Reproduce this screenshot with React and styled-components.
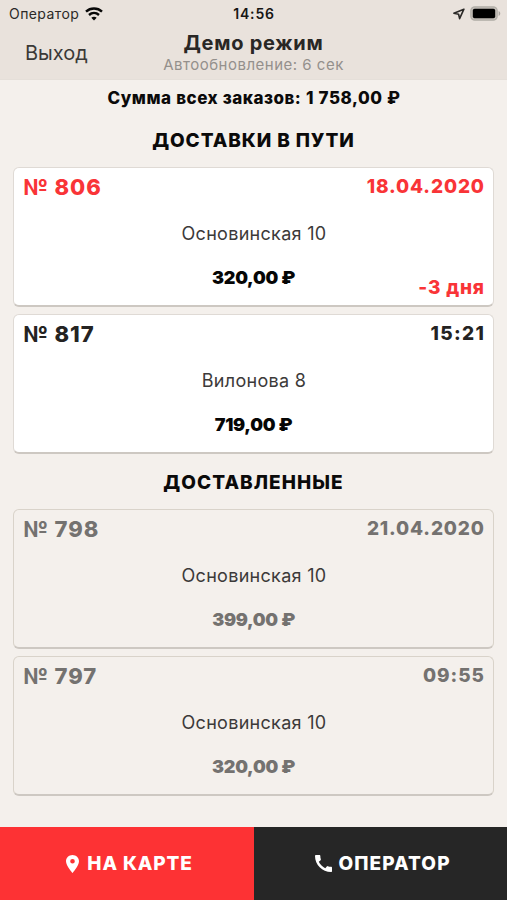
import React from 'react';
import styled, { createGlobalStyle } from 'styled-components';

const GlobalStyle = createGlobalStyle`
  * { box-sizing: border-box; }
  body { margin: 0; background: #f4f0ec; font-family: Inter, sans-serif; }
`;

const Screen = styled.div`
  display: flex;
  flex-direction: column;
  height: 900px;
  overflow: hidden;
  background: #f4f0ec;
`;

const Header = styled.header`
  flex: none;
  height: 80px;
  background: #e9e2dc;
  border-bottom: 1px solid #e5dfd9;
`;

const StatusBar = styled.div`
  display: grid;
  grid-template-columns: 1fr auto 1fr;
  align-items: center;
  height: 27px;
  padding: 0 6px 0 9px;
  color: #2b2927;
  font-size: 14px;
`;

const Carrier = styled.div`
  display: flex;
  align-items: center;
  gap: 6px;
  letter-spacing: 0.42px;
  line-height: 27px;
`;

const Clock = styled.div`
  margin-left: -2px;
  color: #171615;
  font-weight: 600;
  letter-spacing: 0.85px;
`;

const StatusIcons = styled.div`
  display: flex;
  align-items: center;
  justify-content: flex-end;
  gap: 5px;
`;

const NavBar = styled.div`
  display: grid;
  grid-template-columns: 1fr auto 1fr;
  height: 52px;
`;

const ExitButton = styled.button`
  justify-self: start;
  height: 52px;
  padding: 0 0 0 25px;
  border: 0;
  background: none;
  color: #3b3937;
  font: 400 20px/52px Inter, sans-serif;
`;

const TitleGroup = styled.div`
  padding-top: 4px;
  text-align: center;
`;

const Title = styled.h1`
  margin: 0;
  color: #292725;
  font-size: 20px;
  font-weight: 700;
  line-height: 24px;
  letter-spacing: 0.75px;
`;

const Subtitle = styled.div`
  color: #94908c;
  font-size: 15px;
  line-height: 20px;
  letter-spacing: 0.5px;
`;

const Content = styled.main`
  flex: 1;
  padding: 0 13px;
`;

const Total = styled.div`
  height: 36px;
  padding-left: 1px;
  color: #0b0a0a;
  font-size: 17px;
  font-weight: 800;
  line-height: 36px;
  letter-spacing: 0.5px;
  word-spacing: 0.4px;
  text-align: center;
`;

const SectionTitle = styled.h2`
  margin: 0;
  height: ${p => p.$height}px;
  color: #0b0a0a;
  font-size: 19px;
  font-weight: 800;
  line-height: ${p => p.$line}px;
  letter-spacing: ${p => p.$spacing}px;
  text-align: center;
`;

const CardList = styled.div`
  display: flex;
  flex-direction: column;
  gap: 6.5px;
`;

const tones = { late: '#f93437', active: '#242322', done: '#747270' };

const Card = styled.article`
  display: grid;
  grid-template-columns: 1fr auto 1fr;
  grid-template-rows: 40px 52px 1fr;
  height: 140px;
  padding: 0 9px;
  border: 1px solid ${p => (p.$done ? '#d9d3ca' : '#dfdad5')};
  border-bottom: 2px solid #cdc8c2;
  border-radius: 6px;
  background: ${p => (p.$done ? '#f4f0ec' : '#fff')};
`;

const CardHead = styled.div`
  grid-column: 1 / -1;
  display: flex;
  justify-content: space-between;
  color: ${p => tones[p.$tone]};
  font-weight: 800;
  line-height: 38px;
`;

const OrderNumber = styled.span`
  padding-left: 0.5px;
  font-size: 22px;
  letter-spacing: 0.95px;
`;

const OrderTime = styled.span`
  margin-right: -${p => p.$spacing}px;
  font-size: 19px;
  line-height: 37px;
  letter-spacing: ${p => p.$spacing}px;
`;

const Address = styled.div`
  grid-column: 1 / -1;
  padding-left: 1px;
  color: #3c3a39;
  font-size: 18px;
  line-height: 52px;
  letter-spacing: 0.3px;
  text-align: center;
`;

const Price = styled.div`
  grid-column: 2;
  color: ${p => (p.$done ? '#747270' : '#060606')};
  font-size: 18px;
  font-weight: 900;
  line-height: 35px;
  letter-spacing: -0.3px;
`;

const Overdue = styled.div`
  grid-column: 3;
  justify-self: end;
  margin-right: -0.8px;
  color: #f93437;
  font-size: 19px;
  font-weight: 800;
  line-height: 55px;
  letter-spacing: 0.8px;
`;

const Footer = styled.footer`
  display: grid;
  grid-template-columns: 254px 1fr;
  flex: none;
  height: 73px;
`;

const ActionButton = styled.button`
  display: flex;
  align-items: center;
  justify-content: center;
  gap: ${p => p.$gap}px;
  padding: 0 0 0 5px;
  border: 0;
  background: ${p => p.$fill};
  color: #fff;
  font: 800 19px/73px Inter, sans-serif;
  letter-spacing: ${p => p.$spacing}px;
`;

const WifiIcon = () => (
  <svg width="18" height="14" viewBox="0 0 18 14" fill="none" stroke="#080808" strokeWidth="2.4">
    <path d="M1 4.7C5.5.5 12.5.5 17 4.7" />
    <path d="M4 8c2.9-2.6 7.100-2.6 10 0" />
    <path d="M9 13.400 6.300 10.700c1.500-1.300 3.900-1.300 5.400 0z" fill="#080808" stroke="none" />
  </svg>
);

const LocationIcon = () => (
  <svg width="12" height="12" viewBox="0 0 12 12" fill="none" stroke="#2b2927" strokeWidth="1.6" strokeLinejoin="round">
    <path d="M10.900 1.200.9 5.300l4.700 1 1 4.300z" />
  </svg>
);

const BatteryIcon = () => (
  <svg width="31" height="15" viewBox="0 0 31 15">
    <rect x=".8" y=".8" width="26.400" height="13.400" rx="4" fill="#c2bdb6" stroke="#b2aea8" strokeWidth="1.200" />
    <rect x="2.800" y="2.800" width="22.400" height="9.400" rx="1.800" fill="#000" />
    <path d="M28.600 5c2.200.8 2.200 4.200 0 5z" fill="#a9a59f" />
  </svg>
);

const PinIcon = () => (
  <svg width="13" height="18" viewBox="5 2 14 20" preserveAspectRatio="none" fill="#fff">
    <path d="M12 2C8.130 2 5 5.130 5 9c0 5.250 7 13 7 13s7-7.750 7-13c0-3.870-3.130-7-7-7zm0 9.500a2.500 2.500 0 0 1 0-5 2.500 2.500 0 0 1 0 5z" />
  </svg>
);

const PhoneIcon = () => (
  <svg width="17" height="17" viewBox="3 3 18 18" fill="#fff">
    <path d="M20.010 15.380c-1.230 0-2.420-.2-3.530-.56a.977.977 0 0 0-1.010.24l-1.570 1.970c-2.830-1.350-5.480-3.900-6.890-6.830l1.950-1.660c.27-.28.35-.67.24-1.020-.37-1.110-.56-2.300-.56-3.530 0-.54-.45-.99-.99-.99H4.190C3.650 3 3 3.240 3 3.990 3 13.280 10.730 21 20.010 21c.71 0 .99-.63.99-1.180v-3.450c0-.54-.45-.99-.99-.99z" />
  </svg>
);

const onTheWay = [
  { id: 806, time: '18.04.2020', spacing: 0.85, address: 'Основинская 10', price: '320,00 ₽', tone: 'late', overdue: '-3 дня' },
  { id: 817, time: '15:21', spacing: 1.4, address: 'Вилонова 8', price: '719,00 ₽', tone: 'active' },
];

const delivered = [
  { id: 798, time: '21.04.2020', spacing: 0.85, address: 'Основинская 10', price: '399,00 ₽', tone: 'done' },
  { id: 797, time: '09:55', spacing: 0.95, address: 'Основинская 10', price: '320,00 ₽', tone: 'done' },
];

function OrderCard({ order }) {
  const done = order.tone === 'done';
  return (
    <Card $done={done}>
      <CardHead $tone={order.tone}>
        <OrderNumber>№ {order.id}</OrderNumber>
        <OrderTime $spacing={order.spacing}>{order.time}</OrderTime>
      </CardHead>
      <Address>{order.address}</Address>
      <Price $done={done}>{order.price}</Price>
      {order.overdue && <Overdue>{order.overdue}</Overdue>}
    </Card>
  );
}

export default function App() {
  return (
    <Screen>
      <GlobalStyle />
      <Header>
        <StatusBar>
          <Carrier>Оператор <WifiIcon /></Carrier>
          <Clock>14:56</Clock>
          <StatusIcons><LocationIcon /><BatteryIcon /></StatusIcons>
        </StatusBar>
        <NavBar>
          <ExitButton>Выход</ExitButton>
          <TitleGroup>
            <Title>Демо режим</Title>
            <Subtitle>Автообновление: 6 сек</Subtitle>
          </TitleGroup>
        </NavBar>
      </Header>
      <Content>
        <Total>Сумма всех заказов: 1 758,00 ₽</Total>
        <SectionTitle $height={51} $line={49} $spacing={0.9}>ДОСТАВКИ В ПУТИ</SectionTitle>
        <CardList>
          {onTheWay.map(order => <OrderCard key={order.id} order={order} />)}
        </CardList>
        <SectionTitle $height={55.5} $line={58} $spacing={1.05}>ДОСТАВЛЕННЫЕ</SectionTitle>
        <CardList>
          {delivered.map(order => <OrderCard key={order.id} order={order} />)}
        </CardList>
      </Content>
      <Footer>
        <ActionButton $fill="#fd3234" $gap={8} $spacing={0.85}><PinIcon />НА КАРТЕ</ActionButton>
        <ActionButton $fill="#262626" $gap={6} $spacing={1.1}><PhoneIcon />ОПЕРАТОР</ActionButton>
      </Footer>
    </Screen>
  );
}
